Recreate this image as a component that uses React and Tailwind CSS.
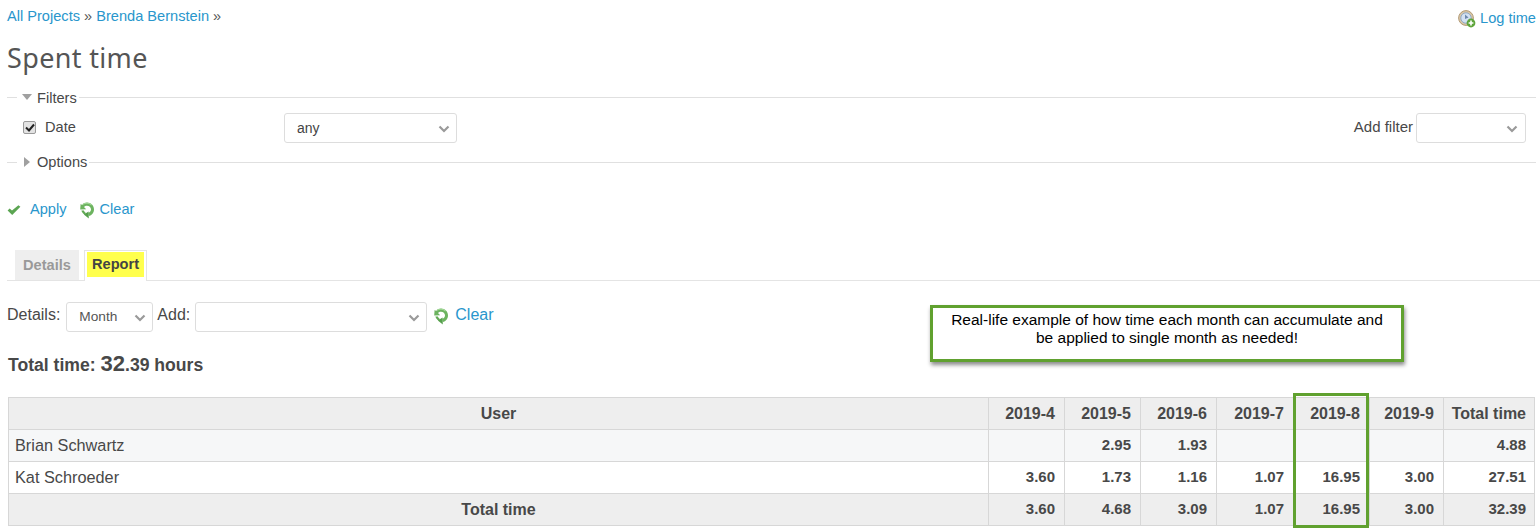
const Sans = "font-['Liberation_Sans',Arial,sans-serif]";

function Chevron({ className = "" }) {
  return (
    <svg width="12" height="8" viewBox="0 0 12 8" className={className}>
      <path d="M1.5 1.5 L6 6 L10.5 1.5" fill="none" stroke="#9a9a9a" strokeWidth="2.2" />
    </svg>
  );
}

function Select({ className, label, textClass = "", chevronClass = "right-[6px]" }) {
  return (
    <div className={`relative bg-white border border-[#dddddd] rounded-[3px] flex items-center shrink-0 ${className}`}>
      <span className={textClass}>{label}</span>
      <Chevron className={`absolute top-[11px] ${chevronClass}`} />
    </div>
  );
}

function ReloadIcon() {
  return (
    <svg width="16" height="18" viewBox="0 0 16 18" className="shrink-0">
      <path d="M8 1.6 C12 1.6 15 4.6 15 8.4 C15 11.6 12.8 14.2 9.8 14.9 L9.4 12 C11 11.5 12 10.1 12 8.6 C12 6.4 10.2 4.7 8 4.7 C6.8 4.7 5.8 5.2 5 6 L7.2 8.2 L1.2 8.6 L1.6 3 L3.2 4 C4.4 2.4 6.1 1.6 8 1.6 Z" fill="#6cb35f" />
      <path d="M4 3.4 C6 1.8 10.5 1.8 12.6 4" fill="none" stroke="#a2d897" strokeWidth="1.1" />
      <path d="M9.8 17.6 L4.8 13.6 L9.6 10.6 Z" fill="#55a04c" />
      <path d="M2.4 9.6 C2.8 11.4 4 12.8 5.4 13.4 L7.4 12 C6 11.6 5.2 10.6 4.9 9.4 Z" fill="#62a955" />
    </svg>
  );
}

function CheckIcon() {
  return (
    <svg width="14" height="12" viewBox="0 0 14 12" className="shrink-0">
      <path d="M0.6 6.4 L2.6 4.4 L5 6.6 L11.4 1.2 L13.4 2.8 L5.2 11 z" fill="#5ba552" />
    </svg>
  );
}

function ClockAddIcon() {
  return (
    <svg width="18" height="18" viewBox="0 0 18 18" className="shrink-0">
      <circle cx="8" cy="8" r="7.4" fill="#d9c7a8" stroke="#b39b76" strokeWidth="1" />
      <circle cx="8" cy="8" r="5.2" fill="#d3e1f2" stroke="#7f9fc4" strokeWidth="0.8" />
      <path d="M7 4.5 L7 9 L10.5 7.5" fill="#6d88ad" />
      <circle cx="13" cy="13" r="4.4" fill="#5fa53c" />
      <path d="M13 10.6 V15.4 M10.6 13 H15.4" stroke="#ffffff" strokeWidth="1.6" />
    </svg>
  );
}

function Legend({ label, open, textClass }) {
  return (
    <div className="flex items-center h-[20px]">
      <div className="w-[10px] h-px bg-[#e0e0e0] mr-[4px] shrink-0" />
      <div className="w-[12px] flex justify-center shrink-0">
        {open ? (
          <svg width="10" height="6" viewBox="0 0 10 6"><path d="M0 0 H10 L5 6 z" fill="#a0a0a0" /></svg>
        ) : (
          <svg width="6" height="10" viewBox="0 0 6 10"><path d="M0 0 V10 L6 5 z" fill="#a0a0a0" /></svg>
        )}
      </div>
      <span className={`text-[#484848] ml-[4px] ${textClass}`}>{label}</span>
      <div className="flex-1 h-px bg-[#e0e0e0] ml-[2px]" />
    </div>
  );
}

const widths = ["w-[76px]", "w-[76px]", "w-[76px]", "w-[77px]", "w-[76px]", "w-[74px]", "w-[91px]"];
const head = ["2019-4", "2019-5", "2019-6", "2019-7", "2019-8", "2019-9", "Total time"];
const rows = [
  { name: "Brian Schwartz", vals: ["", "2.95", "1.93", "", "", "", "4.88"], bg: "bg-[#f6f7f8]" },
  { name: "Kat Schroeder", vals: ["3.60", "1.73", "1.16", "1.07", "16.95", "3.00", "27.51"], bg: "bg-white" },
];
const totals = ["3.60", "4.68", "3.09", "1.07", "16.95", "3.00", "32.39"];
const cell = "border border-[#d7d7d7] h-[32px] p-0";

export default function App() {
  return (
    <div className={`${Sans} relative w-[1540px] h-[532px] overflow-hidden bg-white text-[#484848] text-[14.6px]`}>
      <div className="pl-[7px] pr-[4px]">
        <div className="flex justify-between h-[42px]">
          <div className="pt-[7px] leading-[18px] text-[#555555]">
            <a className="text-[#2996cc]">All Projects</a> » <a className="text-[#2996cc]">Brenda Bernstein</a> »
          </div>
          <div className="flex items-start pt-[10px] pr-0 gap-[4px]">
            <ClockAddIcon />
            <a className="text-[#2996cc] leading-[18px] -mt-[1px]">Log time</a>
          </div>
        </div>
        <h1 className="font-['Noto_Sans',sans-serif] text-[27px] leading-[32px] text-[#555555] tracking-[0.35px]">Spent time</h1>

        <div className="mt-[13px]">
          <Legend label="Filters" open textClass="mt-[4px]" />
          <div className="flex items-center h-[44px] -mt-[1px] pr-[6px]">
            <div className="w-[16px] shrink-0" />
            <div className="w-[13px] h-[13px] rounded-[2px] bg-[#e3e3e3] border border-[#9a9a9a] flex items-center justify-center shrink-0 -mt-[2px]">
              <svg width="10" height="9" viewBox="0 0 10 9"><path d="M1 4.5 L4 7.5 L9 1.5" fill="none" stroke="#222" strokeWidth="2" /></svg>
            </div>
            <span className="ml-[9px] w-[239px] shrink-0">Date</span>
            <Select className="w-[173px] h-[30px]" label="any" textClass="pl-[12px] text-[14px] text-[#444444]" chevronClass="right-[6px]" />
            <div className="flex-1" />
            <span className="mr-[3px] -mt-[2px] text-[15px]">Add filter</span>
            <Select className="w-[110px] h-[30px] mr-[4px]" label="" chevronClass="right-[7px]" />
          </div>
          <div className="mt-[2px]">
            <Legend label="Options" textClass="mt-[2px]" />
          </div>
        </div>

        <div className="flex items-center h-[20px] mt-[28px]">
          <CheckIcon />
          <a className="text-[#2996cc] ml-[9px]">Apply</a>
          <span className="ml-[12px] flex"><ReloadIcon /></span>
          <a className="text-[#2996cc] ml-[5px]">Clear</a>
        </div>

        <div className="mt-[29px] border-b border-[#e4e4e4] h-[32px] flex items-end pl-[8px] -mr-[4px]">
          <div className="w-[64px] h-[30px] bg-[#eeeeee] text-[#999999] font-bold flex items-center justify-center pt-[2px]">Details</div>
          <div className="ml-[5px] w-[63px] h-[31px] -mb-px bg-white border border-b-0 border-[#e4e4e4] flex items-center justify-center">
            <span className="bg-[#ffff4d] h-[25px] w-[57px] -mt-[4px] pt-[2px] flex items-center justify-center font-bold text-[#444444]">Report</span>
          </div>
        </div>

        <div className="flex items-start mt-[21px] h-[30px] text-[16px]">
          <span className="leading-[26px]">Details:</span>
          <Select className="w-[87px] h-[30px] ml-[6px]" label="Month" textClass="pl-[12px] text-[13.7px] text-[#555555] pt-[1px]" chevronClass="right-[6px]" />
          <span className="leading-[26px] ml-[4px]">Add:</span>
          <Select className="w-[232px] h-[30px] ml-[5px]" label="" chevronClass="right-[6px]" />
          <span className="ml-[6px] mt-[5px] flex"><ReloadIcon /></span>
          <a className="text-[#2996cc] ml-[6px] leading-[26px]">Clear</a>
        </div>

        <div className="mt-[20px] pl-[1px] font-bold text-[17.6px] leading-[24px] text-[#484848]">
          Total time: <span className="text-[22px]">32</span>.39 hours
        </div>

        <table className="mt-[20px] ml-[1px] w-[1527px] border-collapse table-fixed text-[15px]">
          <colgroup>
            <col />
            {widths.map((w, i) => <col key={i} className={w} />)}
          </colgroup>
          <thead>
            <tr className="bg-[#eeeeee] text-[16px]">
              <th className={`${cell} font-bold text-center`}>User</th>
              {head.map((h, i) => (
                <th key={h} className={`${cell} font-bold text-right ${i === 6 ? "pr-[8px]" : "pr-[9px]"}`}>{h}</th>
              ))}
            </tr>
          </thead>
          <tbody>
            {rows.map((r) => (
              <tr key={r.name} className={r.bg}>
                <td className={`${cell} pl-[6px] text-[16.3px] font-normal`}>{r.name}</td>
                {r.vals.map((v, i) => (
                  <td key={i} className={`${cell} text-right font-bold ${i === 6 ? "pr-[8px]" : "pr-[9px]"}`}>{v}</td>
                ))}
              </tr>
            ))}
            <tr className="bg-[#eeeeee]">
              <td className={`${cell} text-center font-bold text-[16px]`}>Total time</td>
              {totals.map((v, i) => (
                <td key={i} className={`${cell} text-right font-bold ${i === 6 ? "pr-[8px]" : "pr-[9px]"}`}>{v}</td>
              ))}
            </tr>
          </tbody>
        </table>
      </div>

      <div className="absolute left-[930px] top-[305px] w-[474px] h-[57px] bg-white border-[3px] border-[#60a12f] shadow-[1px_3px_4px_rgba(0,0,0,0.45)] text-black text-center text-[15.5px] leading-[18px] pt-[3px] px-[4px]">
        Real-life example of how time each month can accumulate and<br />be applied to single month as needed!
      </div>
      <div className="absolute left-[1293px] top-[393px] w-[76px] h-[135px] border-[3px] border-[#60a12f]" />
    </div>
  );
}
